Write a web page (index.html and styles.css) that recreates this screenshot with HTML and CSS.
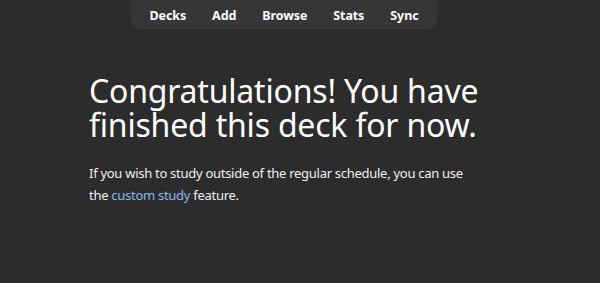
FILE: index.html
```html
<!DOCTYPE html>
<html lang="en">
<head>
  <meta charset="UTF-8" />
  <title>Anki</title>
  <link rel="stylesheet" href="styles.css">
</head>
<body>

<!-- Top toolbar -->
<nav class="toolbar">
  <a href="#decks">Decks</a>
  <a href="#add">Add</a>
  <a href="#browse">Browse</a>
  <a href="#stats">Stats</a>
  <a href="#sync">Sync</a>
</nav>

<!-- Congrats -->
<main class="congrats">
  <h1>Congratulations! You have finished this deck for now.</h1>
  <p>If you wish to study outside of the regular schedule, you can use the <a href="#custom">custom study</a> feature.</p>
</main>

</body>
</html>
```

FILE: styles.css
```css
* { box-sizing: border-box; }
body {
  margin: 0;
  font-family: 'Noto Sans', sans-serif;
  background: #2c2c2c;
  color: #fff;
}

.toolbar {
  display: flex;
  justify-content: center;
  width: 306px;
  height: 29px;
  margin-left: 131px;
  padding-top: 2px;
  align-items: center;
  background: #363636;
  border-radius: 0 0 9px 9px;
}

.toolbar a {
  color: #fff;
  text-decoration: none;
  font-weight: bold;
  font-size: 12.5px;
  letter-spacing: -0.1px;
  padding: 0 13px;
}

.congrats {
  width: 400px;
  margin: 45px 0 0 89px;
}

.congrats h1 {
  font-weight: normal;
  font-size: 32px;
  line-height: 34px;
  letter-spacing: -0.2px;
  margin: 0 0 20px;
}

.congrats p {
  max-width: 378px;
  font-size: 13px;
  line-height: 22px;
  letter-spacing: -0.28px;
  margin: 0;
  color: #f0f0f0;
}

.congrats p a {
  color: #8cb6f2;
  text-decoration: none;
}
```
